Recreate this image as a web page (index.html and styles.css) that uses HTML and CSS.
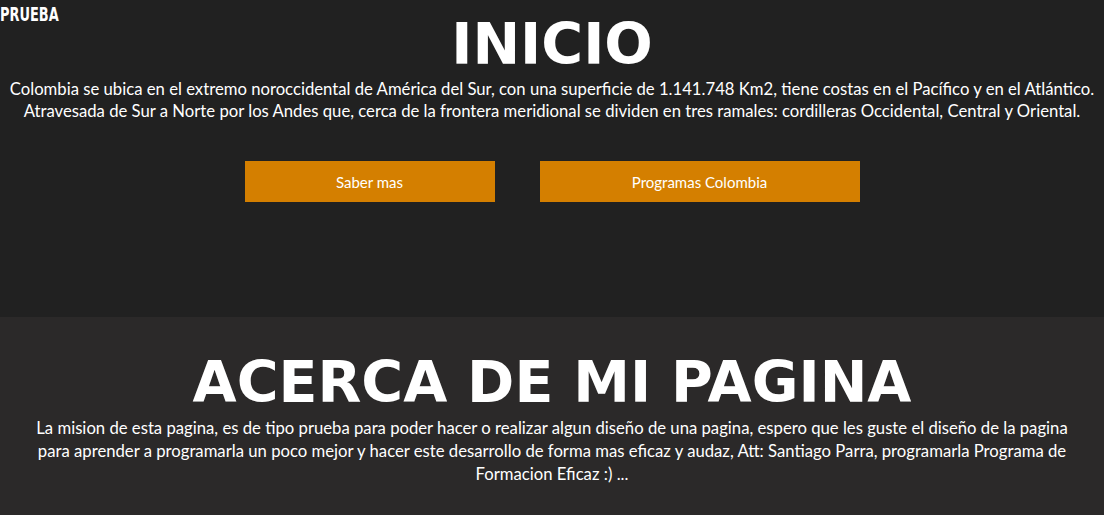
FILE: index.html
```html
<!DOCTYPE html>
<html lang="es">
<head>
<meta charset="utf-8">
<title>Prueba</title>
<link rel="stylesheet" href="styles.css">
</head>
<body>
<div class="brand">PRUEBA</div>
<section class="hero">
  <h1 class="title">INICIO</h1>
  <p class="text">Colombia se ubica en el extremo noroccidental de América del Sur, con una superficie de 1.141.748 Km2, tiene costas en el Pacífico y en el Atlántico. Atravesada de Sur a Norte por los Andes que, cerca de la frontera meridional se dividen en tres ramales: cordilleras Occidental, Central y Oriental.</p>
  <div class="actions">
    <a class="btn btn-small" href="#">Saber mas</a>
    <a class="btn btn-wide" href="#">Programas Colombia</a>
  </div>
</section>
<section class="about">
  <h2 class="title">ACERCA DE MI PAGINA</h2>
  <p class="text text-about">La mision de esta pagina, es de tipo prueba para poder hacer o realizar algun diseño de una pagina, espero que les guste el diseño de la pagina para aprender a programarla un poco mejor y hacer este desarrollo de forma mas eficaz y audaz, Att: Santiago Parra, programarla Programa de Formacion Eficaz :) ...</p>
</section>
</body>
</html>
```
FILE: styles.css
```css
html, body {
  margin: 0;
  padding: 0;
}
body {
  background: #212121;
  color: #ffffff;
  font-family: "Lato", "Noto Sans", sans-serif;
}
.brand {
  position: absolute;
  top: 4px;
  left: 0;
  font-family: "DejaVu Sans Condensed", "DejaVu Sans", sans-serif;
  font-weight: 700;
  font-size: 20px;
  line-height: 20px;
  color: #fff;
  transform: scaleX(0.72);
  transform-origin: left top;
}
.hero {
  height: 317px;
  box-sizing: border-box;
  padding-top: 11px;
  text-align: center;
}
.title {
  margin: 0;
  font-family: "DejaVu Sans", sans-serif;
  font-weight: 700;
  font-size: 57px;
  line-height: 66px;
}
.text {
  margin: 1px 0 0;
  font-size: 16.7px;
  line-height: 22px;
}
.actions {
  display: flex;
  justify-content: center;
  gap: 45px;
  margin-top: 39px;
}
.btn {
  display: flex;
  align-items: center;
  justify-content: center;
  height: 41px;
  background: #d47f00;
  color: #fff;
  text-decoration: none;
  font-size: 15px;
}
.btn-small { width: 250px; }
.btn-wide { width: 320px; }
.about {
  background: #2b2929;
  box-sizing: border-box;
  min-height: 198px;
  padding: 32px 30px 0;
  text-align: center;
}
.text-about {
  margin-top: 2px;
  line-height: 23px;
}
```
